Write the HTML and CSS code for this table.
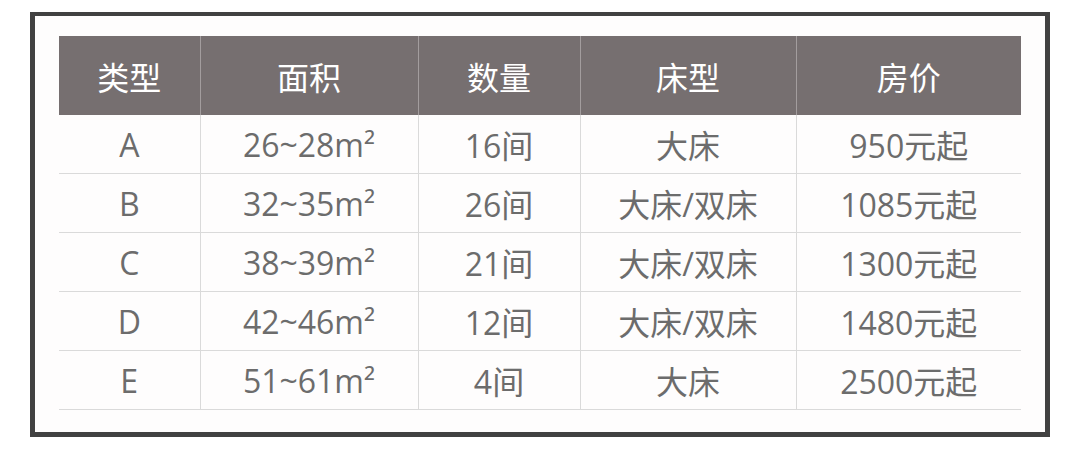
FILE: index.html
```html
<!DOCTYPE html>
<html lang="zh-CN">
<head>
<meta charset="utf-8">
<link rel="stylesheet" href="styles.css">
</head>
<body>
<div class="frame">
  <table class="rooms">
    <colgroup>
      <col class="c1"><col class="c2"><col class="c3"><col class="c4"><col class="c5">
    </colgroup>
    <thead>
      <tr><th>类型</th><th>面积</th><th>数量</th><th>床型</th><th>房价</th></tr>
    </thead>
    <tbody>
      <tr><td>A</td><td>26~28m²</td><td>16间</td><td>大床</td><td>950元起</td></tr>
      <tr><td>B</td><td>32~35m²</td><td>26间</td><td>大床/双床</td><td>1085元起</td></tr>
      <tr><td>C</td><td>38~39m²</td><td>21间</td><td>大床/双床</td><td>1300元起</td></tr>
      <tr><td>D</td><td>42~46m²</td><td>12间</td><td>大床/双床</td><td>1480元起</td></tr>
      <tr><td>E</td><td>51~61m²</td><td>4间</td><td>大床</td><td>2500元起</td></tr>
    </tbody>
  </table>
</div>
</body>
</html>
```
FILE: styles.css
```css
html, body {
  margin: 0;
  padding: 0;
  background: #ffffff;
}
body {
  width: 1080px;
  height: 450px;
  font-family: "Open Sans", "Noto Sans CJK SC", sans-serif;
}
.frame {
  box-sizing: border-box;
  margin: 12px 0 0 30px;
  width: 1020px;
  height: 425px;
  border: 5px solid #414141;
  border-top-width: 4px;
  background: #fefdfd;
  padding: 20px 22px 0 24px;
}
.rooms {
  border-collapse: collapse;
  table-layout: fixed;
  width: 962px;
}
.c1 { width: 141px; }
.c2 { width: 218px; }
.c3 { width: 162px; }
.c4 { width: 216px; }
.c5 { width: 225px; }
.rooms th {
  height: 79px;
  padding: 0;
  background: #766f70;
  color: #ffffff;
  font-weight: 400;
  font-size: 32px;
  text-align: center;
  vertical-align: middle;
  border-left: 1px solid #a39d9e;
}
.rooms th:first-child { border-left: none; }
.rooms td {
  height: 58px;
  padding: 0;
  color: #6c6c6c;
  font-size: 32px;
  text-align: center;
  vertical-align: middle;
  border-bottom: 1px solid #dadada;
  border-left: 1px solid #dadada;
}
.rooms td:first-child { border-left: none; }
```
